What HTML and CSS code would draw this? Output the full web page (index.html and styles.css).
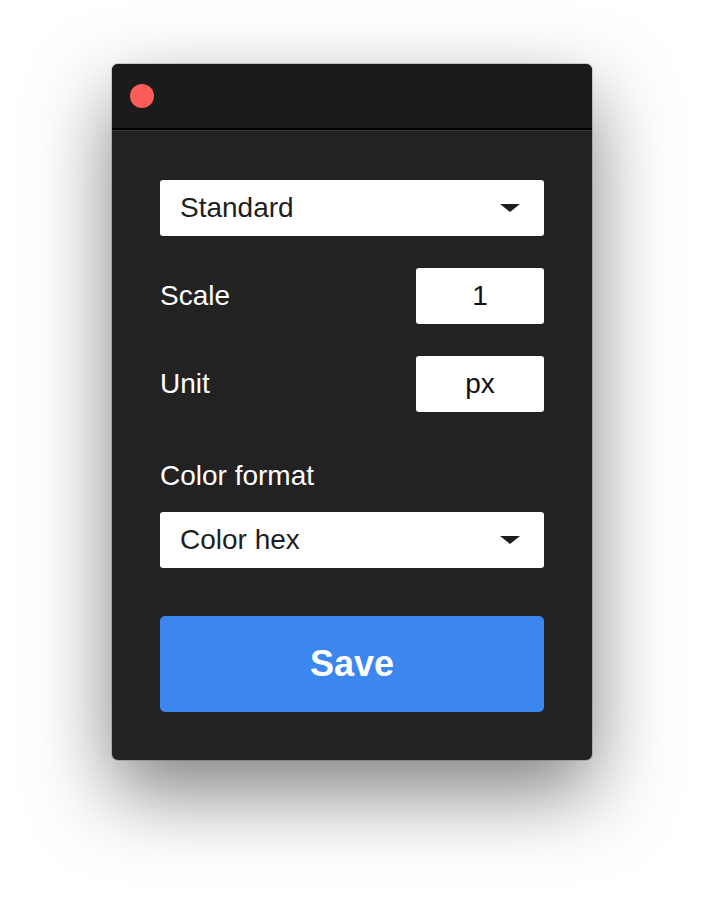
FILE: index.html
```html
<!DOCTYPE html>
<html lang="en">
<head>
<meta charset="utf-8">
<title>Settings</title>
<link rel="stylesheet" href="styles.css">
</head>
<body>
<div class="window">
  <div class="titlebar">
    <span class="close-dot"></span>
  </div>
  <div class="content">
    <div class="select">
      <span class="select-text">Standard</span>
      <span class="caret"></span>
    </div>
    <div class="row">
      <span class="label">Scale</span>
      <div class="field">1</div>
    </div>
    <div class="row">
      <span class="label">Unit</span>
      <div class="field">px</div>
    </div>
    <div class="section-label">Color format</div>
    <div class="select">
      <span class="select-text">Color hex</span>
      <span class="caret"></span>
    </div>
    <button class="save">Save</button>
  </div>
</div>
</body>
</html>
```

FILE: styles.css
```css
html, body {
  margin: 0;
  padding: 0;
  background: #ffffff;
}

body {
  padding: 64px 0 160px;
  min-height: 920px;
  box-sizing: border-box;
  font-family: "Liberation Sans", Arial, sans-serif;
}

.window {
  width: 480px;
  margin: 0 auto;
  background: #222222;
  border-radius: 6px;
  overflow: hidden;
  box-shadow: 0 32px 80px rgba(0, 0, 0, 0.5), 0 0 0 1px rgba(0, 0, 0, 0.15);
}

.titlebar {
  height: 64px;
  background: #1b1b1b;
  border-bottom: 2px solid #000000;
  display: flex;
  align-items: center;
  padding-left: 18px;
}

.close-dot {
  width: 24px;
  height: 24px;
  border-radius: 50%;
  background: #fc5b57;
}

.content {
  border-top: 1px solid #383838;
  padding: 49px 48px 48px;
  display: flex;
  flex-direction: column;
}

.select {
  height: 56px;
  background: #ffffff;
  border-radius: 3px;
  display: flex;
  align-items: center;
  justify-content: space-between;
  padding: 0 24px 0 20px;
}

.select-text {
  font-size: 28px;
  line-height: 32px;
  color: #1e1e1e;
}

.caret {
  width: 0;
  height: 0;
  border-left: 10px solid transparent;
  border-right: 10px solid transparent;
  border-top: 8px solid #1e1e1e;
}

.row {
  margin-top: 32px;
  display: flex;
  align-items: center;
  justify-content: space-between;
}

.label,
.section-label {
  font-size: 28px;
  line-height: 32px;
  color: #ffffff;
}

.field {
  width: 128px;
  height: 56px;
  background: #ffffff;
  border-radius: 3px;
  display: flex;
  align-items: center;
  justify-content: center;
  font-size: 28px;
  color: #111111;
}

.section-label {
  margin-top: 48px;
  margin-bottom: 20px;
}

.save {
  margin-top: 48px;
  height: 96px;
  border: none;
  border-radius: 5px;
  background: #3b86ef;
  color: #ffffff;
  font-family: "Liberation Sans", Arial, sans-serif;
  font-weight: bold;
  font-size: 36px;
  padding: 0;
}
```
